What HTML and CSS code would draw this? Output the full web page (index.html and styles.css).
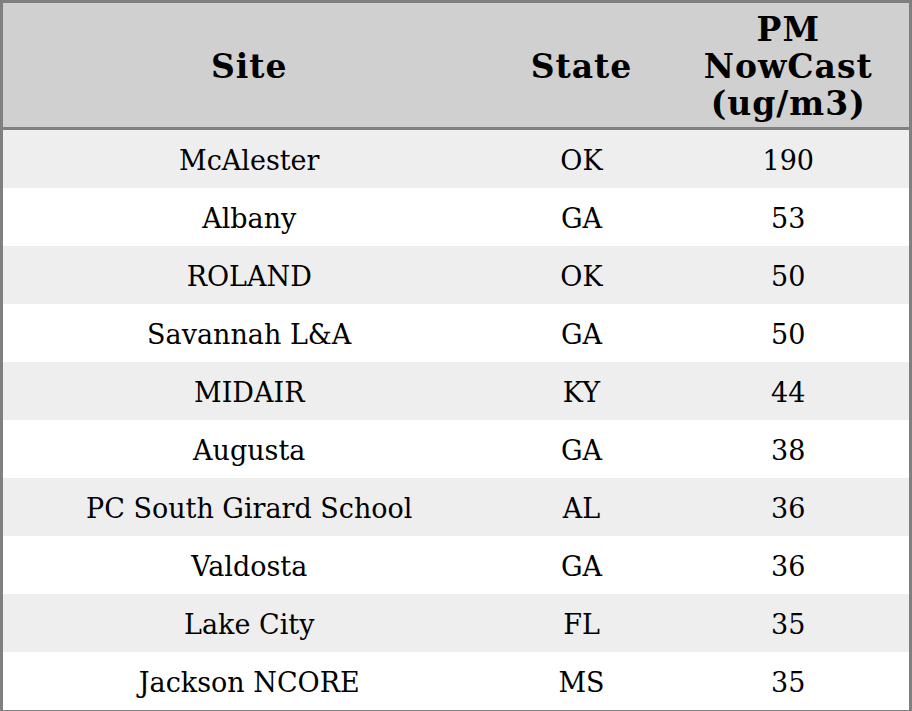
FILE: index.html
```html
<!DOCTYPE html>
<html>
<head>
<meta charset="utf-8">
<link rel="stylesheet" href="styles.css">
</head>
<body>
<table class="aq">
  <colgroup>
    <col class="c-site">
    <col class="c-state">
    <col class="c-pm">
  </colgroup>
  <thead>
    <tr><th>Site</th><th>State</th><th>PM<br>NowCast<br>(ug/m3)</th></tr>
  </thead>
  <tbody>
    <tr><td>McAlester</td><td>OK</td><td>190</td></tr>
    <tr><td>Albany</td><td>GA</td><td>53</td></tr>
    <tr><td>ROLAND</td><td>OK</td><td>50</td></tr>
    <tr><td>Savannah L&amp;A</td><td>GA</td><td>50</td></tr>
    <tr><td>MIDAIR</td><td>KY</td><td>44</td></tr>
    <tr><td>Augusta</td><td>GA</td><td>38</td></tr>
    <tr><td>PC South Girard School</td><td>AL</td><td>36</td></tr>
    <tr><td>Valdosta</td><td>GA</td><td>36</td></tr>
    <tr><td>Lake City</td><td>FL</td><td>35</td></tr>
    <tr><td>Jackson NCORE</td><td>MS</td><td>35</td></tr>
  </tbody>
</table>
</body>
</html>
```
FILE: styles.css
```css
html, body {
  margin: 0;
  padding: 0;
  background: #ffffff;
}
.aq {
  width: 912px;
  border-collapse: collapse;
  border: 3px solid #808080;
  font-family: "DejaVu Serif", serif;
  color: #000;
}
.c-site { width: 494px; }
.c-state { width: 172px; }
.aq th {
  background: #d0d0d0;
  font-weight: bold;
  font-size: 33px;
  line-height: 37px;
  letter-spacing: 1px;
  padding: 8px 4px 5px;
  text-align: center;
  border-bottom: 3px solid #808080;
}
.aq td {
  font-size: 27px;
  line-height: 30px;
  text-align: center;
  padding: 16px 4px 12px;
}
.aq tbody tr:nth-child(odd) td { background: #eeeeee; }
.aq tbody tr:nth-child(even) td { background: #ffffff; }
```
